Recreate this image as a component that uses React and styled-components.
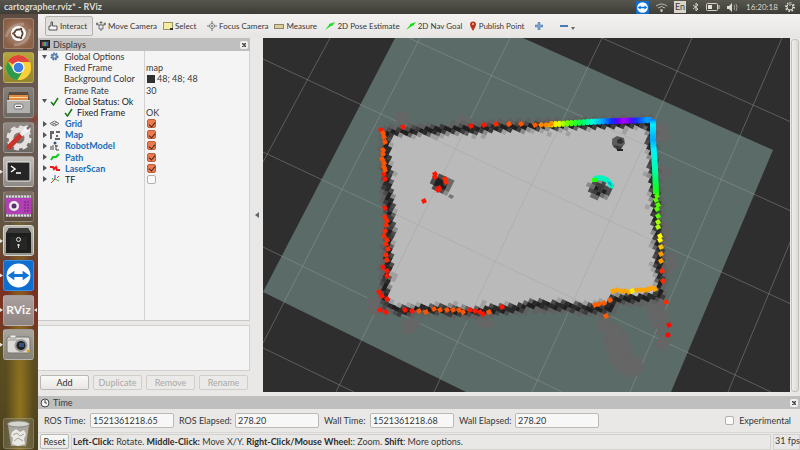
import React from "react";
import styled, { createGlobalStyle, css } from "styled-components";

const Global = createGlobalStyle`
  * { box-sizing: border-box; }
  body { margin: 0; background: #e9e8e6; }
  body, button, input { font-family: Lato, "Open Sans", sans-serif; font-size: 9px; line-height: 11px; color: #383838; }
  button { margin: 0; padding: 0; border: 0; background: none; }
  svg { display: block; flex: none; }
`;

/* ---------- shell ---------- */
const Desktop = styled.div`
  height: 100vh;
  display: grid;
  grid-template-rows: 14px 1fr;
  overflow: hidden;
`;
const TopBar = styled.header`
  display: flex;
  align-items: center;
  justify-content: space-between;
  padding: 0 5px 0 4px;
  background: linear-gradient(#57564e, #3d3c37);
  color: #dfdbd2;
`;
const WindowTitle = styled.h1`
  margin: 0;
  font-size: 9px;
  line-height: 14px;
  font-weight: 700;
  white-space: nowrap;
`;
const Indicators = styled.div`
  display: flex;
  align-items: center;
  gap: 7px;
`;
const Clock = styled.time`
  width: 32px;
  white-space: nowrap;
  font-size: 8px;
`;
const Lang = styled.button`
  width: 12px;
  height: 12px;
  background: #d9d5cb;
  color: #3d3c37;
  font-size: 9px;
  line-height: 12px;
`;
const Body = styled.div`
  min-height: 0;
  display: grid;
  grid-template-columns: 38px minmax(0, 1fr);
`;

/* ---------- launcher ---------- */
const Launcher = styled.nav`
  display: flex;
  flex-direction: column;
  justify-content: space-between;
  padding: 2px 0 1px;
  background:
    radial-gradient(circle at 34px 24%, #8a4030 0, transparent 7px),
    radial-gradient(ellipse at 20px 90%, #8f741e 0, transparent 14px),
    linear-gradient(#5c4c43, #6c5c54 22%, #65584e 42%, #5f5138 52%, #7a2f22 60%, #7a3423 70%, #5b4d22 77%, #574a20 88%, #4a3f1e 100%);
`;
const AppList = styled.div`
  height: 346px;
  display: grid;
  grid-template-rows: repeat(10, 1fr);
`;
const AppSlot = styled.div`
  display: grid;
  grid-template-columns: 3px 31px 4px;
  align-items: center;
`;
const AppButton = styled.button`
  width: 31px;
  height: 31px;
  border-radius: 3px;
  background: ${(p) => p.$bg};
  border: 1px solid ${(p) => p.$edge || "#ffffff30"};
  display: grid;
  place-items: center;
`;
const Pip = styled.span`
  height: 4px;
  width: 3px;
  background: ${(p) => (p.$show ? "#e8e6e2" : "transparent")};
  clip-path: ${(p) =>
    p.$left ? "polygon(100% 0, 100% 100%, 0 50%)" : "polygon(0 0, 100% 50%, 0 100%)"};
`;

/* ---------- window ---------- */
const Window = styled.main`
  min-height: 0;
  display: grid;
  grid-template-rows: 24px minmax(0, 1fr) 36px 18px;
  background: #e9e8e6;
`;
const Toolbar = styled.div`
  display: flex;
  align-items: center;
  padding: 1px 0 1px 7px;
  background: linear-gradient(#f3f2f0, #e6e5e3);
`;
const Tool = styled.button`
  flex: 0 0 ${(p) => p.$w}px;
  height: 20px;
  padding: 0 3px;
  display: flex;
  align-items: center;
  gap: 2px;
  font-size: 8px;
  white-space: nowrap;
  border-radius: 2px;
  ${(p) =>
    p.$active &&
    css`
      border: 1px solid #b4b2ae;
      background: linear-gradient(#dddcda, #e9e8e6);
      padding: 0 2px;
    `}
`;
const Workspace = styled.div`
  min-height: 0;
  display: grid;
  grid-template-columns: 212px 13px minmax(0, 1fr) 10px;
  padding-bottom: 4px;
`;
const Dock = styled.section`
  min-height: 0;
  display: grid;
  grid-template-rows: 13px minmax(0, 1fr) 46px 15px;
  row-gap: 4px;
  padding-bottom: 2px;
`;
const PanelHeader = styled.header`
  height: 13px;
  display: flex;
  align-items: center;
  gap: 3px;
  padding: 0 2px;
  background: #bfbfbf;
`;
const PanelTitle = styled.h2`
  margin: 0;
  flex: 1;
  font-size: 9px;
  line-height: 13px;
  font-weight: 400;
`;
const CloseButton = styled.button`
  width: 8px;
  height: 8px;
  border-radius: 2px;
  background: #f1f0ee;
  display: grid;
  place-items: center;
`;
const Tree = styled.div`
  margin-top: -4px;
  background: linear-gradient(90deg, #f4f4f4 106px, #d2d2d2 106px, #d2d2d2 107px, #f4f4f4 107px);
  border-right: 1px solid #d2d2d2;
  border-bottom: 1px solid #c9c9c9;
`;
const TreeRows = styled.div`
  height: 134px;
  display: grid;
  grid-auto-rows: 1fr;
`;
const TreeRow = styled.div`
  display: grid;
  grid-template-columns: 106px 1fr;
  align-items: center;
`;
const NameCell = styled.span`
  display: flex;
  align-items: center;
  padding-left: ${(p) => (p.$depth ? 26 : 4)}px;
  white-space: nowrap;
  color: ${(p) => (p.$link ? "#1a6cb8" : p.$strong ? "#1c1c1c" : "#383838")};
  font-weight: ${(p) => (p.$link ? 700 : 400)};
`;
const Twisty = styled.button`
  width: 8px;
  height: 11px;
  display: grid;
  place-items: center start;
`;
const IconSlot = styled.span`
  width: ${(p) => (p.$narrow ? 13 : 15)}px;
  display: grid;
  place-items: center start;
`;
const ValueCell = styled.span`
  display: flex;
  align-items: center;
  gap: 2px;
  padding-left: 2px;
  white-space: nowrap;
`;
const Swatch = styled.i`
  width: 8px;
  height: 8px;
  background: #303030;
  margin-left: 1px;
`;
const Check = styled.input`
  appearance: none;
  margin: 0 0 0 1px;
  width: 9px;
  height: 9px;
  border: 1px solid #b3b1ad;
  border-radius: 2px;
  background: #fafafa;
  display: grid;
  place-items: center;
  &:checked { background: #ee7a4e; border-color: #b9603f; }
  &:checked::after {
    content: "";
    width: 3px;
    height: 5px;
    border: solid #3f2a22;
    border-width: 0 1px 1px 0;
    transform: rotate(40deg);
  }
`;
const Description = styled.div`
  background: #f4f4f4;
  border: 1px solid #d0d0d0;
  border-left: 0;
`;
const ButtonRow = styled.div`
  display: grid;
  grid-template-columns: repeat(4, 1fr);
  gap: 4px;
  padding: 0 2px;
`;
const PushButton = styled.button`
  height: 15px;
  border: 1px solid #b9b7b3;
  border-radius: 2px;
  background: linear-gradient(#f9f9f8, #e8e7e5);
  color: #2e2e2e;
  &:disabled { color: #a9a8a6; border-color: #cfcecb; background: #ebeae8; }
`;
const Gutter = styled.button`
  display: grid;
  place-items: center;
`;
const View = styled.div`
  min-width: 0;
  min-height: 0;
  overflow: hidden;
  background: #2e2e2e;
`;
const Scene = styled.svg`
  width: 100%;
  height: 100%;
`;
const RightGutter = styled.button`
  margin: 1px 1px 0;
  border: 1px solid #c2c0bc;
  border-radius: 3px;
  background: linear-gradient(90deg, #efeeec, #dbdad7);
`;
const TimeDock = styled.section`
  display: grid;
  grid-template-rows: 13px 1fr;
`;
const TimeRow = styled.div`
  display: flex;
  align-items: center;
  padding: 0 9px 0 6px;
`;
const FieldLabel = styled.label`
  flex: 0 0 ${(p) => p.$w}px;
  white-space: nowrap;
`;
const Field = styled.input`
  flex: 0 0 84px;
  width: 84px;
  height: 15px;
  margin-right: 5px;
  padding: 0 2px;
  border: 1px solid #bcbab6;
  border-radius: 2px;
  background: #f7f7f7;
`;
const Experimental = styled.label`
  margin-left: auto;
  display: flex;
  align-items: center;
  gap: 5px;
`;
const StatusBar = styled.footer`
  display: grid;
  grid-template-columns: 29px minmax(0, 1fr) 27px;
  gap: 2px;
  padding: 1px 0 1px 2px;
  border-top: 1px solid #d8d7d4;
`;
const Hint = styled.p`
  margin: 0;
  padding-left: 1px;
  border: 1px solid #d3d2cf;
  line-height: 14px;
  white-space: nowrap;
  b { color: #2c2c2c; }
`;
const Fps = styled.output`
  border: 1px solid #d3d2cf;
  padding-left: 1px;
  line-height: 12px;
  white-space: nowrap;
`;

/* ---------- scene geometry ---------- */
const U = [3.77, 1.73];
const V = [-1.87, 3.75];
const O = [456, 149];
const WALL = [
  [386, 133], [440, 130], [540, 126], [649, 123], [652, 150], [656, 215], [659, 258],
  [660, 278], [660, 296], [634, 299], [614, 298], [609, 309], [590, 309], [563, 306], [531, 305],
  [513, 309], [469, 312], [422, 309], [400, 311], [384, 305], [386, 282], [390, 222],
  [387, 180],
];
const noise = (i, j) => {
  const s = Math.sin(i * 127.1 + j * 311.7) * 43758.5453;
  return s - Math.floor(s);
};
const inside = (x, y) => {
  let c = false;
  for (let a = 0, b = WALL.length - 1; a < WALL.length; b = a++) {
    const [xa, ya] = WALL[a];
    const [xb, yb] = WALL[b];
    if (ya > y !== yb > y && x < ((xb - xa) * (y - ya)) / (yb - ya) + xa) c = !c;
  }
  return c;
};
const wallDistance = (x, y) => {
  let best = 1e9;
  WALL.forEach(([xa, ya], k) => {
    const [xb, yb] = WALL[(k + 1) % WALL.length];
    const dx = xb - xa;
    const dy = yb - ya;
    const t = Math.max(0, Math.min(1, ((x - xa) * dx + (y - ya) * dy) / (dx * dx + dy * dy)));
    best = Math.min(best, Math.hypot(x - xa - t * dx, y - ya - t * dy));
  });
  return inside(x, y) ? -best : best;
};
/* cx, cy, rx, ry, tilt in degrees */
const SMEARS = [
  [402, 118, 7, 6, 0], [464, 121, 9, 5, -10], [411, 325, 7, 9, 20], [484, 323, 8, 6, 0],
  [662, 134, 7, 9, 0], [665, 172, 6, 6, 0], [667, 236, 4, 12, 0], [671, 264, 4, 13, 0],
  [618, 348, 13, 24, -18], [631, 365, 12, 11, 0], [605, 322, 8, 9, 0], [657, 314, 10, 19, -14],
  [663, 342, 7, 8, 0], [374, 306, 7, 8, 0],
];
const smeared = (x, y) =>
  SMEARS.some(([cx, cy, rx, ry, deg]) => {
    const r = (deg * Math.PI) / 180;
    const dx = x - cx;
    const dy = y - cy;
    const a = (dx * Math.cos(r) + dy * Math.sin(r)) / rx;
    const b = (-dx * Math.sin(r) + dy * Math.cos(r)) / ry;
    return a * a + b * b < 1;
  });
const OBSTACLES = [[442, 184, 13, 10], [599, 190, 14, 11]];

const CELLS = (() => {
  const out = {};
  const put = (fill, x, y) => {
    const p = (a, b) => `${(x + a * U[0] + b * V[0]).toFixed(1)} ${(y + a * U[1] + b * V[1]).toFixed(1)}`;
    out[fill] = (out[fill] || "") + `M${p(0, 0)}L${p(1.08, 0)}L${p(1.08, 1.08)}L${p(0, 1.08)}Z`;
  };
  for (let i = -60; i < 80; i++)
    for (let j = -60; j < 80; j++) {
      const x = O[0] + i * U[0] + j * V[0];
      const y = O[1] + i * U[1] + j * V[1];
      if (x < 365 || x > 685 || y < 105 || y > 385) continue;
      const cx = x + 1;
      const cy = y + 3;
      const d = wallDistance(cx, cy);
      const n = noise(i, j);
      let fill = null;
      if (d < -9) {
        for (const [ox, oy, rx, ry] of OBSTACLES) {
          const q = Math.hypot((cx - ox) / rx, (cy - oy) / ry);
          if (q < 0.5) fill = n < 0.5 ? "#202020" : "#3c3c3c";
          else if (q < 0.8) fill = n < 0.5 ? "#4c4c4c" : "#6a6a6a";
          else if (q < 1) fill = n < 0.6 ? "#8a8a8a" : null;
        }
      } else if (d < -6) fill = n < 0.14 ? "#a0a0a0" : null;
      else if (d < -4.5) fill = n < 0.4 ? "#a0a0a0" : n < 0.6 ? "#8a8a8a" : null;
      else if (d < -3) fill = n < 0.4 ? "#606060" : n < 0.8 ? "#4c4c4c" : "#8a8a8a";
      else if (d < -1.5) fill = n < 0.5 ? "#2a2a2a" : "#3c3c3c";
      else if (d < 2) fill = n < 0.7 ? "#202020" : "#2a2a2a";
      else if (d < 4) fill = n < 0.4 ? "#3c3c3c" : n < 0.8 ? "#4c4c4c" : "#606060";
      else if (d < 7) fill = n < 0.65 ? "#606060" : n < 0.85 ? "#5c6664" : null;
      if (!fill && d > 3 && smeared(cx, cy)) fill = n < 0.8 ? "#666666" : "#646666";
      if (fill) put(fill, x, y);
    }
  return Object.entries(out);
})();

const run = (color, ...pts) => pts.map(([x, y]) => [x, y, color]);
const SCAN = [
  ...run("#ff1500", [403, 127], [381, 130], [384, 174], [385, 179], [385, 208], [471, 126], [484, 125], [435, 174], [435, 177], [439, 188], [438, 190], [424, 201]),
  ...run("#ff2a00", [496, 124], [445, 179], [446, 182], [385, 217], [387, 221], [386, 225], [385, 231], [384, 236], [387, 240], [386, 244], [388, 249], [386, 255], [387, 260]),
  ...run("#ff5500", [383, 133], [384, 137], [385, 142], [383, 150], [383, 154], [382, 159], [384, 163], [384, 167], [385, 170], [509, 124], [521, 124], [535, 125]),
  ...run("#ff1500", [383, 267], [387, 271], [387, 276], [379, 292], [382, 296], [387, 299], [380, 310], [386, 312], [405, 310], [412, 311], [470, 310], [475, 311], [480, 312], [483, 314], [502, 307]),
  ...run("#ff5500", [419, 311], [426, 312], [434, 309], [440, 310], [447, 310], [453, 310], [459, 310], [463, 312], [489, 312]),
  ...run("#ff8800", [541, 125], [546, 125], [551, 124]),
  ...run("#ff5f00", [595, 305], [599, 304], [604, 303], [610, 300], [606, 316]),
  ...run("#ffa500", [613, 291], [617, 290], [621, 291], [625, 291], [629, 292], [637, 290], [641, 290], [645, 290], [649, 289], [652, 288], [655, 289]),
  ...run("#fff000", [632, 291]),
  ...run("#ff2a00", [662, 271], [663, 281], [666, 302]),
  ...run("#ff0800", [669, 325], [668, 335]),
  ...run("#50ff00", [657, 196], [656, 200], [658, 205], [657, 209], [658, 216]),
  ...run("#a8ff00", [658, 222], [658, 227]),
  ...run("#ffff00", [660, 236], [660, 240]),
  ...run("#ffc400", [661, 247]),
  ...run("#ff9900", [661, 254], [661, 261]),
];
const RAINBOW_STOPS = [
  ["0", "#ffd000"], ["0.1", "#e6ff00"], ["0.2", "#5cff00"], ["0.32", "#00ff5a"], ["0.42", "#00ffe0"],
  ["0.52", "#009dff"], ["0.6", "#1030ff"], ["0.66", "#5a00ff"], ["0.71", "#b000ff"], ["0.77", "#6a00ff"],
  ["0.83", "#1030ff"], ["0.93", "#00a0ff"], ["1", "#0090ff"],
];
const GRID_LINES =
  "M330 38L263 162M420 38L263 343M510 38L336 392M602 38L517 215L434 392M692 38L610 220L532 392M782 38L630 392M791 240L728 392" +
  "M409 38L530 93L791 211M263 59L381 114L530 184L791 304M263 152L395 214L530 278L771 392M263 247L458 342L562 392M263 348L354 392M602 38L677 71L791 122";
const ROOM = `M${WALL.map((p) => p.join(" ")).join("L")}Z`;

function MapScene() {
  return (
    <Scene viewBox="263 38 527 354" preserveAspectRatio="xMidYMid slice" role="img" aria-label="Occupancy map with laser scan">
      <defs>
        <linearGradient id="rainbow" gradientUnits="userSpaceOnUse" x1="548" y1="0" x2="654" y2="0">
          {RAINBOW_STOPS.map(([o, c]) => <stop key={o} offset={o} stopColor={c} />)}
        </linearGradient>
        <linearGradient id="fall" gradientUnits="userSpaceOnUse" x1="0" y1="118" x2="0" y2="196">
          <stop offset="0" stopColor="#0060ff" />
          <stop offset="0.08" stopColor="#00f0ff" />
          <stop offset="0.28" stopColor="#00a8ff" />
          <stop offset="0.4" stopColor="#00f0ff" />
          <stop offset="0.65" stopColor="#00ffb0" />
          <stop offset="0.82" stopColor="#00ff50" />
          <stop offset="1" stopColor="#20ff00" />
        </linearGradient>
        <clipPath id="room"><path d={ROOM} /></clipPath>
      </defs>
      <path d="M395 38H523L773 150L671 392H466L263 292Z" fill="#5a6b68" />
      <path d={GRID_LINES} fill="none" stroke="#a0a0a0" strokeOpacity="0.42" strokeWidth="1" />
      <path d={ROOM} fill="#bababa" />
      <path d={GRID_LINES} clipPath="url(#room)" fill="none" stroke="#a9a9a9" strokeOpacity="0.6" strokeWidth="1" />
      {CELLS.map(([fill, d]) => <path key={fill} d={d} fill={fill} />)}
      <circle cx="618" cy="143" r="6" fill="#505050" />
      <path d="M612 139L617 136L624 138L625 144L621 146L613 145Z" fill="#5c5c5c" />
      <path d="M617 140L621 138L624 142L621 144L617 143Z" fill="#303030" />
      <path d="M614 145L622 147L620 151L617 150Z" fill="#3a3a3a" />
      <path d="M617 149h6v2h-6z" fill="#222" />
      <path d="M450 194l4 2-2 3-4-2z" fill="#777" />
      <path d="M548 123L570 121L597 119L650 117.500L654 121L650 122.500L600 123.500L570 125L548 127Z" fill="url(#rainbow)" />
      <path d="M550 124.500L597 121.500L652 120" fill="none" stroke="url(#rainbow)" strokeWidth="6" strokeDasharray="3 1" />
      <path d="M653 119L653 140L655 168L656 194" fill="none" stroke="url(#fall)" strokeWidth="6" strokeLinejoin="round" />
      <path d="M594 179Q602 176 608 181Q612 184 611 188" fill="none" stroke="#00f5c0" strokeWidth="5" />
      <path d="M592 178h5v4h-5z" fill="#28ff10" />
      <path d="M607 181l4 2 1 4-3-3z" fill="#0098e8" />
      {SCAN.map(([x, y, c]) => (
        <path key={`${x}-${y}`} d={`M${x - 3} ${y - 1}L${x + 1} ${y - 3}L${x + 3} ${y + 1}L${x - 1} ${y + 3}Z`} fill={c} />
      ))}
    </Scene>
  );
}

/* ---------- icons ---------- */
const Ic = ({ s = 10, h, vb, children }) => (
  <svg width={s} height={h || s} viewBox={vb || `0 0 ${s} ${h || s}`} aria-hidden="true">{children}</svg>
);
const Viewer = ({ s }) => (
  <Ic s={s} vb="0 0 28 28">
    <rect width="28" height="28" rx="2" fill="#0f6fd0" />
    <circle cx="14" cy="14" r="11.5" fill="#fff" />
    <path d="M3.500 14L10 9.500V12.500H18V9.500L24.500 14L18 18.500V15.500H10V18.500Z" fill="#1273d6" />
  </Ic>
);
const APPS = [
  { name: "Dash", bg: "radial-gradient(circle, #b69684, #8a6047 75%)", art: (
    <Ic s={29}>
      <path d="M2 18Q6 5 20 5M26 10Q25 25 10 26" stroke="#ffffff35" strokeWidth="3" fill="none" />
      <circle cx="14.500" cy="14.500" r="7.500" fill="#fff" />
      <circle cx="14.500" cy="14.500" r="4" fill="none" stroke="#5f4335" strokeWidth="2" />
      <path d="M14.500 14.500H8M14.500 14.500L18 8.500M14.500 14.500L18 20.500" stroke="#fff" strokeWidth="1" />
      <circle cx="14.500" cy="14.500" r="2.800" fill="#fff" />
      <circle cx="9.500" cy="14.500" r="1.300" fill="#5f4335" /><circle cx="17" cy="10" r="1.300" fill="#5f4335" /><circle cx="17" cy="19" r="1.300" fill="#5f4335" />
    </Ic>) },
  { name: "Chrome", bg: "linear-gradient(#b5a53e, #93842f)", run: true, art: (
    <Ic s={29}>
      <circle cx="14.500" cy="14.500" r="12.500" fill="#f9cf3a" />
      <path d="M14.500 14.500L3.700 8.200A12.500 12.500 0 0 1 25.300 8.200L26 9H14.500Z" fill="#e0443a" />
      <path d="M3.700 8.200A12.500 12.500 0 0 0 13.500 27L19.500 17.500L9.500 17Z" fill="#2d9a4c" />
      <path d="M26 9.500A12.500 12.500 0 0 1 13.500 27L19.500 17.500L20 9.500Z" fill="#f9cf3a" />
      <circle cx="14.500" cy="14.500" r="6" fill="#fff" /><circle cx="14.500" cy="14.500" r="4.800" fill="#3d7ee6" />
    </Ic>) },
  { name: "Files", bg: "linear-gradient(#85807a, #6e6a65)", art: (
    <Ic s={29}>
      <path d="M5 4H24L26 14H3Z" fill="#5b4b3e" />
      <path d="M5 7H24V13H5Z" fill="#e28a3e" /><path d="M5 9H24V10H5Z" fill="#f5d7a8" />
      <path d="M3 12H26V25H3Z" fill="#b3b1ae" /><path d="M3 12H26V13H3Z" fill="#dddbd8" />
      <rect x="10" y="16" width="9" height="5" rx="2" fill="#efefef" stroke="#777" strokeWidth="1" />
      <path d="M12 18.500H17" stroke="#555" />
    </Ic>) },
  { name: "System Settings", bg: "linear-gradient(#928b86, #6d6763)", art: (
    <Ic s={29}>
      <circle cx="15" cy="15" r="8" fill="none" stroke="#e2e1df" strokeWidth="5" />
      <circle cx="15" cy="15" r="11" fill="none" stroke="#e2e1df" strokeWidth="3" strokeDasharray="5 3.600" />
      <path d="M5 24L17 12" stroke="#c9352a" strokeWidth="5" strokeLinecap="round" />
      <path d="M17 12L23 6" stroke="#efefef" strokeWidth="4" /><circle cx="23" cy="6" r="3.500" fill="#f3f3f3" /><path d="M23 6L27 2" stroke="#7c7672" strokeWidth="2.500" />
    </Ic>) },
  { name: "Terminal", bg: "linear-gradient(#c2bfbb, #8d8985)", run: true, art: (
    <Ic s={29}>
      <rect x="3" y="5" width="23" height="19" rx="1" fill="#252525" stroke="#eee" strokeWidth="1" />
      <path d="M7 9L11 12L7 15M12 16H17" stroke="#fff" strokeWidth="1.500" fill="none" />
    </Ic>) },
  { name: "Recorder", bg: "linear-gradient(#7d7167, #5a4b3c)", art: (
    <Ic s={29}>
      <rect x="2" y="3" width="25" height="22" fill="#8d8390" />
      <rect x="2" y="6" width="25" height="16" fill="#b040b4" />
      <path d="M2 4.500H27M2 23.500H27" stroke="#ddd" strokeWidth="2" strokeDasharray="2 1" />
      <circle cx="10" cy="14" r="5" fill="#eee" /><circle cx="10" cy="14" r="2.500" fill="#57306e" />
      <path d="M20 10H26M20 13H26M20 16H26M20 19H26" stroke="#6b2273" strokeDasharray="2 1" />
    </Ic>) },
  { name: "Vault", bg: "linear-gradient(#b9b8b1, #96958d)", edge: "#d5d4cc", run: true, art: (
    <Ic s={29}>
      <path d="M5 2H24L27 7V27H2V7Z" fill="#1e1e1d" /><path d="M5 2H24L26 7H3Z" fill="#3a3a38" />
      <path d="M6 11H23V24H6Z" fill="#262625" />
      <circle cx="14.500" cy="13.500" r="2" fill="none" stroke="#ddd" /><path d="M14.500 18V22M13 19H16" stroke="#ddd" />
    </Ic>) },
  { name: "TeamViewer", bg: "#1474d8", run: true, art: <Viewer s={29} /> },
  { name: "RViz", bg: "linear-gradient(#aaa19f, #8d8482)", run: true, both: true, label: true },
  { name: "Camera", bg: "linear-gradient(#a6a49d, #85837a)", run: true, art: (
    <Ic s={29}>
      <rect x="3" y="7" width="23" height="16" rx="2" fill="#dcdbd8" stroke="#77756f" />
      <path d="M6 5H12V8H6ZM4 10H14" stroke="#99978f" fill="#eee" />
      <circle cx="17" cy="15.500" r="6.500" fill="#9a9a98" /><circle cx="17" cy="15.500" r="4.500" fill="#222" /><rect x="15" y="13" width="5" height="4" fill="#30507e" />
      <circle cx="24" cy="21" r="1.500" fill="#e8a020" />
    </Ic>) },
];
const RvizMark = styled.span`
  font-size: 12px;
  line-height: 14px;
  color: #f6f4f2;
  font-weight: 700;
`;
const Trash = () => (
  <Ic s={29}>
    <path d="M4 6H25L22 27H7Z" fill="#a9a79d" />
    <ellipse cx="14.500" cy="5" rx="11" ry="3" fill="#d5d4cd" stroke="#888" />
    <path d="M8 13L12 10L16 13L20 11L22 15L20 20L21 25L14 27L8 25L9 19L7 17Z" fill="#e9e8e2" />
    <path d="M9 16L13 14L16 17L20 15M10 22L14 19L19 22" stroke="#a5a39a" fill="none" />
  </Ic>
);

const MoveIcon = () => (
  <Ic s={10}>
    <path d="M3 4H7V8H3ZM5 4V1M0 3L3 4M10 3L7 4M5 8V10" fill="none" stroke="#6f6f6d" />
    <path d="M3 2L5 0L7 2ZM0 1.500L2.500 2L1 5ZM10 1.500L7.500 2L9 5Z" fill="#6f6f6d" />
  </Ic>
);
const FocusIcon = () => (
  <Ic s={10}>
    <circle cx="5" cy="5" r="2.500" fill="none" stroke="#8a8a88" />
    <path d="M5 0V3M5 7V10M0 5H3M7 5H10" stroke="#777" />
    <circle cx="5" cy="5" r="1" fill="#777" />
  </Ic>
);
const ArrowIcon = () => <Ic s={10}><path d="M0 9L4 4L4 3L10 1L7 5L6 5Z" fill="#18e020" /></Ic>;
const TOOLS = [
  { label: "Interact", w: 48, icon: <Ic s={10}><path d="M1 9V5H3V1H4.500V5H9V9Z" fill="#f6f6f5" stroke="#555" /></Ic> },
  { label: "Move Camera", w: 67, icon: <MoveIcon /> },
  { label: "Select", w: 44, icon: <Ic s={10} h={8}><rect x="0.500" y="0.500" width="9" height="7" fill="#f4eda0" stroke="#9a9560" /><path d="M7 6h3v2H7z" fill="#333" /></Ic> },
  { label: "Focus Camera", w: 67, icon: <FocusIcon /> },
  { label: "Measure", w: 51, icon: <Ic s={10} h={5}><rect x="0.500" y="0.500" width="9" height="4" fill="#d8cf9a" stroke="#8c8768" /></Ic> },
  { label: "2D Pose Estimate", w: 80, icon: <ArrowIcon /> },
  { label: "2D Nav Goal", w: 63, icon: <ArrowIcon /> },
  { label: "Publish Point", w: 66, icon: <Ic s={8} h={10}><path d="M4 10Q1 5 1 3.500A3 3 0 0 1 7 3.500Q7 5 4 10Z" fill="#b8341c" /><circle cx="4" cy="3" r="1" fill="#ffb9a0" /></Ic> },
  { label: "", name: "Add tool", w: 25, icon: <Ic s={8}><path d="M3 0H5V3H8V5H5V8H3V5H0V3H3Z" fill="#7da3d6" stroke="#47709f" strokeWidth="0.500" /></Ic> },
  { label: "", name: "Remove tool", w: 24, icon: <Ic s={16} h={8}><path d="M0 3H8V5H0Z" fill="#4a7ab8" /><path d="M11 5H15L13 8Z" fill="#666" /></Ic> },
];

const checkIcon = <Ic s={9}><path d="M1 5L3.500 8L8 1" stroke="#117a11" strokeWidth="1.500" fill="none" /></Ic>;
const ROWS = [
  { name: "Global Options", open: true, icon: <Ic s={9}><circle cx="4.500" cy="4.500" r="3" fill="#6f94c4" stroke="#4b72a6" strokeWidth="2" strokeDasharray="1.500 1" /><circle cx="4.500" cy="4.500" r="1" fill="#fff" /></Ic> },
  { name: "Fixed Frame", depth: 1, value: "map" },
  { name: "Background Color", depth: 1, value: "48; 48; 48", swatch: true },
  { name: "Frame Rate", depth: 1, value: "30" },
  { name: "Global Status: Ok", open: true, strong: true, icon: checkIcon },
  { name: "Fixed Frame", depth: 1, strong: true, icon: checkIcon, value: "OK" },
  { name: "Grid", link: true, on: true, icon: <Ic s={9}><path d="M0 4.500L4.500 2L9 4.500L4.500 7ZM2 3.500L7 6M7 3L2 6" stroke="#777" fill="none" /></Ic> },
  { name: "Map", link: true, on: true, icon: <Ic s={10}><path d="M0 1H4V4H2V9H0ZM6 1H10V3H6ZM6 5H8V7H6ZM5 8H10V10H5Z" fill="#666" /></Ic> },
  { name: "RobotModel", link: true, on: true, icon: <Ic s={10}><path d="M1 5V9M3 4V9M6 4V9L9 9M5 5H8" stroke="#444" fill="none" /><circle cx="5" cy="2" r="1.500" fill="#3c4f80" /></Ic> },
  { name: "Path", link: true, on: true, icon: <Ic s={10}><path d="M1 8L3 5L6 5L9 2" stroke="#12c81c" strokeWidth="2" fill="none" /></Ic> },
  { name: "LaserScan", link: true, on: true, icon: <Ic s={10}><path d="M0 4H3L4 6L6 4L7 7H10" stroke="#f01818" strokeWidth="2" fill="none" /></Ic> },
  { name: "TF", strong: true, on: false, icon: <Ic s={10}><path d="M5 5V1" stroke="#3040e0" /><path d="M5 5L1 9M9 2L7 4" stroke="#d03030" /><path d="M5 5L9 7M2 4L4 7" stroke="#30b030" /></Ic> },
];
const Close = ({ label }) => (
  <CloseButton aria-label={label}><Ic s={4}><path d="M0 0L4 4M4 0L0 4" stroke="#444" strokeWidth="1.500" /></Ic></CloseButton>
);

const FIELDS = [
  ["ros-time", "ROS Time:", "1521361218.65", 46],
  ["ros-elapsed", "ROS Elapsed:", "278.20", 56],
  ["wall-time", "Wall Time:", "1521361218.68", 46],
  ["wall-elapsed", "Wall Elapsed:", "278.20", 56],
];

export default function App() {
  return (
    <Desktop>
      <Global />
      <TopBar>
        <WindowTitle>cartographer.rviz* - RViz</WindowTitle>
        <Indicators>
          <Viewer s={13} />
          <Ic s={11} h={9}><path d="M0 3Q5.500 -1 11 3M2 5Q5.500 2 9 5M4 7Q5.500 6 7 7" stroke="#bdb9b0" fill="none" /><circle cx="5.500" cy="8" r="1" fill="#ddd" /></Ic>
          <Lang>En</Lang>
          <Ic s={6} h={10}><path d="M0 3L5 7L3 9V1L5 3L0 7" stroke="#d5d1c8" fill="none" /></Ic>
          <Ic s={14} h={8}><rect x="0.500" y="0.500" width="11" height="7" rx="1" fill="none" stroke="#d5d1c8" /><path d="M2 2H6V6H2Z" fill="#e5e1d8" /><path d="M13 2V6" stroke="#d5d1c8" /></Ic>
          <Ic s={12} h={9}><path d="M0 3H2L5 0V9L2 6H0Z" fill="#dfdbd2" /><path d="M7 2Q8.500 4.500 7 7M9 1Q11 4.500 9 8" stroke="#a5a198" fill="none" /></Ic>
          <Clock>16:20:18</Clock>
          <Ic s={10}><circle cx="5" cy="5" r="3" fill="none" stroke="#dfdbd2" /><circle cx="5" cy="5" r="4" fill="none" stroke="#dfdbd2" strokeDasharray="1.500 1.600" strokeWidth="2" /><path d="M5 0V5" stroke="#45443e" strokeWidth="3" /><path d="M5 0V4" stroke="#dfdbd2" /></Ic>
        </Indicators>
      </TopBar>
      <Body>
        <Launcher aria-label="Launcher">
          <AppList>
            {APPS.map((a) => (
              <AppSlot key={a.name}>
                <Pip $show={a.run} />
                <AppButton $bg={a.bg} $edge={a.edge} aria-label={a.name}>
                  {a.label ? <RvizMark>RViz</RvizMark> : a.art}
                </AppButton>
                <Pip $show={a.both} $left />
              </AppSlot>
            ))}
          </AppList>
          <AppSlot>
            <Pip />
            <AppButton $bg="#77735a80" aria-label="Trash"><Trash /></AppButton>
            <Pip />
          </AppSlot>
        </Launcher>
        <Window>
          <Toolbar role="toolbar">
            {TOOLS.map((t, i) => (
              <Tool key={t.name || t.label} $w={t.w} $active={i === 0} aria-label={t.name}>
                {t.icon}{t.label}
              </Tool>
            ))}
          </Toolbar>
          <Workspace>
            <Dock>
              <PanelHeader>
                <Ic s={10}><rect x="0.500" y="0.500" width="9" height="7" fill="#333" stroke="#222" /><path d="M2 2h2v4H2z" fill="#b04a5a" /><path d="M4 2h2v4H4z" fill="#46b05a" /><path d="M6 2h2v4H6z" fill="#4a5ab8" /><path d="M3 9H7" stroke="#222" strokeWidth="2" /></Ic>
                <PanelTitle>Displays</PanelTitle>
                <Close label="Close Displays" />
              </PanelHeader>
              <Tree>
                <TreeRows>
                  {ROWS.map((r, i) => (
                    <TreeRow key={i}>
                      <NameCell $depth={r.depth} $link={r.link} $strong={r.strong}>
                        {!r.depth && (
                          <Twisty aria-label={`Toggle ${r.name}`}>
                            <Ic s={6}><path d={r.open ? "M0 1H5L2.500 5Z" : "M1 0L5 3L1 6Z"} fill="#555" /></Ic>
                          </Twisty>
                        )}
                        {r.icon && <IconSlot $narrow={r.depth}>{r.icon}</IconSlot>}
                        {r.name}
                      </NameCell>
                      <ValueCell>
                        {r.swatch && <Swatch />}
                        {r.value}
                        {r.on !== undefined && <Check type="checkbox" defaultChecked={r.on} aria-label={r.name} />}
                      </ValueCell>
                    </TreeRow>
                  ))}
                </TreeRows>
              </Tree>
              <Description />
              <ButtonRow>
                <PushButton>Add</PushButton>
                <PushButton disabled>Duplicate</PushButton>
                <PushButton disabled>Remove</PushButton>
                <PushButton disabled>Rename</PushButton>
              </ButtonRow>
            </Dock>
            <Gutter aria-label="Collapse left panel"><Ic s={4} h={6}><path d="M4 0V6L0 3Z" fill="#666" /></Ic></Gutter>
            <View><MapScene /></View>
            <RightGutter aria-label="Expand right panel" />
          </Workspace>
          <TimeDock>
            <PanelHeader>
              <Ic s={10}><circle cx="5" cy="5" r="4" fill="#f4f4f4" stroke="#444" /><path d="M5 2V5H7" stroke="#444" fill="none" /></Ic>
              <PanelTitle>Time</PanelTitle>
              <Close label="Close Time" />
            </PanelHeader>
            <TimeRow>
              {FIELDS.map(([id, label, value, w]) => (
                <React.Fragment key={id}>
                  <FieldLabel htmlFor={id} $w={w}>{label}</FieldLabel>
                  <Field id={id} defaultValue={value} />
                </React.Fragment>
              ))}
              <Experimental><Check type="checkbox" />Experimental</Experimental>
            </TimeRow>
          </TimeDock>
          <StatusBar>
            <PushButton>Reset</PushButton>
            <Hint><b>Left-Click:</b> Rotate. <b>Middle-Click:</b> Move X/Y. <b>Right-Click/Mouse Wheel:</b>: Zoom. <b>Shift</b>: More options.</Hint>
            <Fps>31 fps</Fps>
          </StatusBar>
        </Window>
      </Body>
    </Desktop>
  );
}
